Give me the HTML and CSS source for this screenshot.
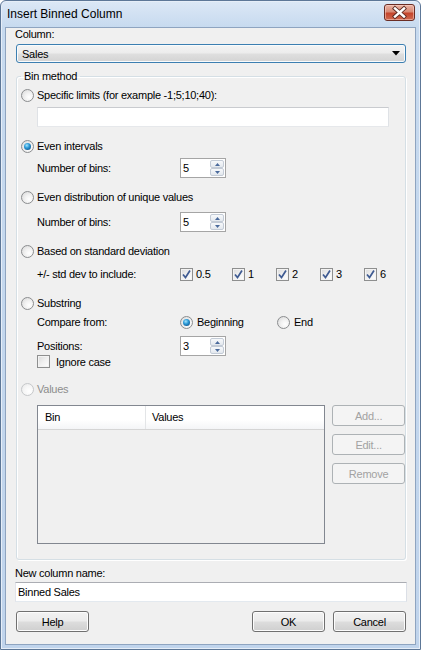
FILE: index.html
```html
<!DOCTYPE html>
<html>
<head>
<meta charset="utf-8">
<link rel="stylesheet" href="styles.css">
</head>
<body>
<div class="window">
  <div class="titlebar">
    <span class="title">Insert Binned Column</span>
    <span class="close">
      <svg width="29" height="15" viewBox="0 0 29 15">
        <path d="M10 3.5 L19 11.5 M19 3.5 L10 11.5" stroke="#5a2a22" stroke-width="4.2" stroke-linecap="square"/>
        <path d="M10 3.5 L19 11.5 M19 3.5 L10 11.5" stroke="#ffffff" stroke-width="2.4" stroke-linecap="square"/>
      </svg>
    </span>
  </div>
  <div class="client">
    <div class="label">Column:</div>
    <div class="combo">
      <span>Sales</span>
      <svg width="8" height="5" viewBox="0 0 8 5"><path d="M0 0 H8 L4 4.5 Z" fill="#000"/></svg>
    </div>

    <fieldset class="group">
      <legend>Bin method</legend>

      <div class="opt r-limits"><span class="radio"></span><span>Specific limits (for example -1;5;10;40):</span></div>
      <div class="textbox limits"></div>

      <div class="opt r-even"><span class="radio checked"></span><span>Even intervals</span></div>
      <div class="sub bins-a">
        <span class="sublabel">Number of bins:</span>
        <div class="spin"><span class="spin-val">5</span><div class="spin-btns"><span class="sb"><svg width="5" height="3" viewBox="0 0 5 3"><path d="M0 3 L2.5 0 L5 3 Z" fill="#4a6a9c"/></svg></span><span class="sb"><svg width="5" height="3" viewBox="0 0 5 3"><path d="M0 0 L2.5 3 L5 0 Z" fill="#4a6a9c"/></svg></span></div></div>
      </div>

      <div class="opt r-dist"><span class="radio"></span><span>Even distribution of unique values</span></div>
      <div class="sub bins-b">
        <span class="sublabel">Number of bins:</span>
        <div class="spin"><span class="spin-val">5</span><div class="spin-btns"><span class="sb"><svg width="5" height="3" viewBox="0 0 5 3"><path d="M0 3 L2.5 0 L5 3 Z" fill="#4a6a9c"/></svg></span><span class="sb"><svg width="5" height="3" viewBox="0 0 5 3"><path d="M0 0 L2.5 3 L5 0 Z" fill="#4a6a9c"/></svg></span></div></div>
      </div>

      <div class="opt r-std"><span class="radio"></span><span>Based on standard deviation</span></div>
      <div class="sub std">
        <span class="sublabel">+/- std dev to include:</span>
        <div class="checks">
          <span class="chk"><span class="cbox on"><svg width="11" height="11" viewBox="0 0 11 11"><path d="M2 5.5 L4.5 8.5 L9 1.5" fill="none" stroke="#3f5b92" stroke-width="1.7"/></svg></span>0.5</span>
          <span class="chk"><span class="cbox on"><svg width="11" height="11" viewBox="0 0 11 11"><path d="M2 5.5 L4.5 8.5 L9 1.5" fill="none" stroke="#3f5b92" stroke-width="1.7"/></svg></span>1</span>
          <span class="chk"><span class="cbox on"><svg width="11" height="11" viewBox="0 0 11 11"><path d="M2 5.5 L4.5 8.5 L9 1.5" fill="none" stroke="#3f5b92" stroke-width="1.7"/></svg></span>2</span>
          <span class="chk"><span class="cbox on"><svg width="11" height="11" viewBox="0 0 11 11"><path d="M2 5.5 L4.5 8.5 L9 1.5" fill="none" stroke="#3f5b92" stroke-width="1.7"/></svg></span>3</span>
          <span class="chk"><span class="cbox on"><svg width="11" height="11" viewBox="0 0 11 11"><path d="M2 5.5 L4.5 8.5 L9 1.5" fill="none" stroke="#3f5b92" stroke-width="1.7"/></svg></span>6</span>
        </div>
      </div>

      <div class="opt r-sub"><span class="radio"></span><span>Substring</span></div>
      <div class="sub compare">
        <span class="sublabel">Compare from:</span>
        <div class="choices">
          <span class="choice"><span class="radio checked"></span>Beginning</span>
          <span class="choice"><span class="radio"></span>End</span>
        </div>
      </div>
      <div class="sub positions">
        <span class="sublabel">Positions:</span>
        <div class="spin"><span class="spin-val">3</span><div class="spin-btns"><span class="sb"><svg width="5" height="3" viewBox="0 0 5 3"><path d="M0 3 L2.5 0 L5 3 Z" fill="#4a6a9c"/></svg></span><span class="sb"><svg width="5" height="3" viewBox="0 0 5 3"><path d="M0 0 L2.5 3 L5 0 Z" fill="#4a6a9c"/></svg></span></div></div>
      </div>
      <div class="sub ignore"><span class="cbox"></span><span class="ignore-text">Ignore case</span></div>

      <div class="opt r-values disabled"><span class="radio"></span><span>Values</span></div>
      <div class="values">
        <div class="list">
          <div class="list-head">
            <span class="col col-bin">Bin</span>
            <span class="col col-values">Values</span>
          </div>
        </div>
        <div class="list-btns">
          <span class="btn off">Add...</span>
          <span class="btn off">Edit...</span>
          <span class="btn off">Remove</span>
        </div>
      </div>
    </fieldset>

    <div class="label newname">New column name:</div>
    <div class="textbox name">Binned Sales</div>

    <div class="footer">
      <span class="btn help">Help</span>
      <div class="footer-right">
        <span class="btn">OK</span>
        <span class="btn">Cancel</span>
      </div>
    </div>
  </div>
</div>
</body>
</html>
```

FILE: styles.css
```css
html, body {
  margin: 0;
  padding: 0;
  background: #ffffff;
}

body {
  font-family: "Liberation Sans", Arial, sans-serif;
  font-size: 11px;
  letter-spacing: -0.25px;
  color: #000;
}

.window {
  width: 421px;
  height: 650px;
  box-sizing: border-box;
  border: 1px solid #5d7797;
  border-radius: 6px 6px 0 0;
  background: linear-gradient(#dce8f6 0, #c7daef 26px, #c0d4ec 100%);
  padding: 0 4px 4px 4px;
  display: flex;
  flex-direction: column;
  box-shadow: inset 0 0 0 1px #e6eef8;
}

.titlebar {
  height: 26px;
  display: flex;
  justify-content: space-between;
  align-items: flex-start;
  padding-left: 2px;
  flex: none;
}

.title {
  margin-top: 5px;
  font-size: 12px;
  line-height: 16px;
  letter-spacing: 0;
  color: #000;
}

.close {
  margin-top: 3px;
  margin-right: 1px;
  width: 31px;
  height: 17px;
  box-sizing: border-box;
  border: 1px solid #6a2d24;
  border-radius: 3px;
  background: linear-gradient(#eab2a3 0%, #d88a75 45%, #c5452c 55%, #cf6a51 100%);
  box-shadow: inset 0 0 0 1px rgba(255, 220, 210, 0.5);
  display: flex;
  align-items: center;
  justify-content: center;
}

.client {
  flex: 1;
  background: #f0f0f0;
  border: 1px solid #8ea4c0;
  padding: 0 9px 0 10px;
  display: flex;
  flex-direction: column;
}

.label {
  line-height: 13px;
  height: 13px;
  margin-left: -1px;
  margin-bottom: 3px;
}

.combo {
  height: 19px;
  box-sizing: border-box;
  border: 1px solid #3c7fb1;
  border-radius: 3px;
  background: linear-gradient(#f4f4f4 0%, #ececec 48%, #dfdfdf 52%, #d3d3d3 100%);
  box-shadow: inset 0 0 0 1px #f8fbfd;
  display: flex;
  align-items: center;
  justify-content: space-between;
  padding: 0 5px 0 5px;
}

.group {
  margin: 7px 0 0 0;
  border: 1px solid #d5dfe5;
  border-radius: 3px;
  box-shadow: inset 1px 1px 0 #ffffff, 1px 1px 0 #ffffff;
  padding: 5px 0 15px 4px;
  min-width: 0;
}

.group legend {
  padding: 0 3px;
  line-height: 13px;
  margin-left: 0;
}

.opt {
  display: flex;
  align-items: center;
  height: 14px;
}

.opt .radio {
  margin-right: 3px;
}

.radio {
  width: 13px;
  height: 13px;
  box-sizing: border-box;
  border-radius: 50%;
  border: 1px solid #8b8d8f;
  background: radial-gradient(circle at 65% 65%, #ffffff 0%, #f2f2f2 40%, #d6d6d6 100%);
  flex: none;
  display: inline-flex;
  align-items: center;
  justify-content: center;
}

.radio.checked::after {
  content: "";
  width: 7px;
  height: 7px;
  border-radius: 50%;
  background: radial-gradient(circle at 40% 35%, #a6e4fb 0%, #2c9bd8 40%, #135a93 80%, #0e3c68 100%);
}

.disabled {
  color: #8d8d8d;
}

.disabled .radio {
  border-color: #c6c8ca;
  background: radial-gradient(circle at 65% 65%, #ffffff 0%, #f6f6f6 50%, #e6e6e6 100%);
}

.textbox {
  box-sizing: border-box;
  height: 20px;
  background: #ffffff;
  border: 1px solid;
  border-color: #abadb3 #dbdfe6 #e3e9ef #e2e3ea;
  line-height: 18px;
  padding-left: 2px;
}

.limits {
  margin: 5px 0 0 16px;
  width: 352px;
  border-color: #c9cbcf #dfe2e6 #e6e8eb #dfe2e6;
}

.r-even { margin-top: 12px; }
.r-dist { margin-top: 12px; }
.r-std { margin-top: 12px; }
.r-sub { margin-top: 15px; }
.r-values { margin-top: 14px; }

.sub {
  display: flex;
  align-items: center;
  padding-left: 16px;
}

.sublabel {
  width: 143px;
  flex: none;
}

.bins-a { margin-top: 5px; height: 20px; }
.bins-b { margin-top: 8px; height: 20px; }
.std { margin-top: 9px; height: 14px; }
.compare { margin-top: 5px; height: 14px; }
.positions { margin-top: 7px; height: 20px; }
.ignore { margin-top: -1px; height: 13px; }

.spin {
  width: 46px;
  height: 20px;
  box-sizing: border-box;
  border: 1px solid #a5a5a5;
  background: #ffffff;
  display: flex;
}

.spin-val {
  flex: 1;
  line-height: 18px;
  padding-left: 2px;
}

.spin-btns {
  width: 15px;
  display: flex;
  flex-direction: column;
  padding: 1px 1px 1px 0;
  box-sizing: border-box;
}

.sb {
  flex: 1;
  box-sizing: border-box;
  border: 1px solid #c3cbd6;
  border-radius: 2px;
  background: linear-gradient(#f7f9fb, #e3e8ee);
  display: flex;
  align-items: center;
  justify-content: center;
}

.checks {
  display: grid;
  grid-template-columns: 52px 44px 44px 44px 44px;
}

.chk {
  display: flex;
  align-items: center;
}

.cbox {
  width: 13px;
  height: 13px;
  box-sizing: border-box;
  border: 1px solid #8e8f8f;
  background: linear-gradient(135deg, #dadada 0%, #f0f0f0 50%, #ffffff 100%);
  box-shadow: inset 0 0 0 1px #f3f3f3;
  display: inline-flex;
  align-items: center;
  justify-content: center;
  flex: none;
  margin-right: 3px;
}

.ignore-text {
  margin-left: 3px;
}

.choices {
  display: grid;
  grid-template-columns: 97px auto;
}

.choice {
  display: flex;
  align-items: center;
}

.choice .radio {
  margin-right: 4px;
}

.values {
  display: flex;
  margin-top: 9px;
  height: 139px;
}

.list {
  margin-left: 16px;
  width: 289px;
  box-sizing: border-box;
  border: 1px solid #828790;
  background: #f0f0f0;
}

.list-head {
  height: 24px;
  box-sizing: border-box;
  background: linear-gradient(#ffffff 0%, #ffffff 60%, #f4f5f7 100%);
  border-bottom: 1px solid #d5d5d5;
  display: flex;
}

.col {
  line-height: 23px;
  box-sizing: border-box;
}

.col-bin {
  width: 108px;
  padding-left: 7px;
  border-right: 1px solid #e3e5e7;
}

.col-values {
  padding-left: 6px;
}

.list-btns {
  margin-left: 7px;
  width: 73px;
  display: flex;
  flex-direction: column;
  gap: 8px;
}

.btn {
  height: 21px;
  box-sizing: border-box;
  border: 1px solid #707070;
  border-radius: 3px;
  background: linear-gradient(#f2f2f2 0%, #ebebeb 48%, #dddddd 52%, #cfcfcf 100%);
  box-shadow: inset 0 0 0 1px #fcfcfc;
  display: flex;
  align-items: center;
  justify-content: center;
}

.btn.off {
  border-color: #adb2b5;
  background: #f4f4f4;
  box-shadow: none;
  color: #a2a2a2;
}

.newname {
  margin-top: 7px;
  margin-bottom: 2px;
}

.name {
  margin-left: -1px;
  margin-right: -1px;
}

.footer {
  margin-top: 9px;
  display: flex;
  justify-content: space-between;
}

.footer .btn {
  width: 73px;
}

.footer-right {
  display: flex;
  gap: 8px;
}
```
